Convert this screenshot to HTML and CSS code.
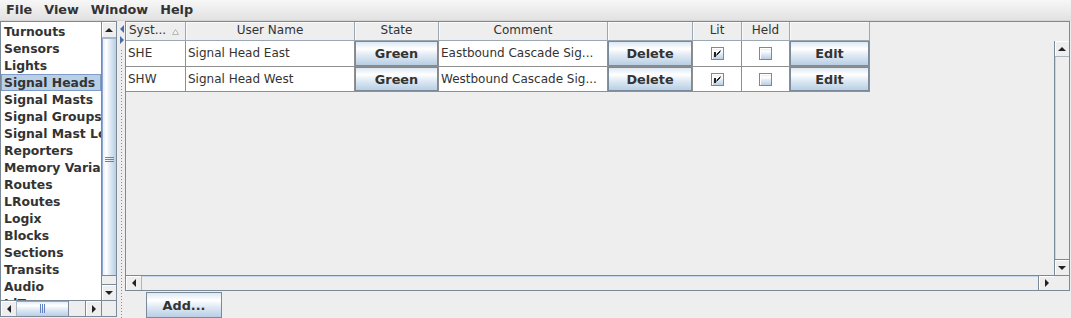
FILE: index.html
```html
<!DOCTYPE html>
<html>
<head>
<meta charset="utf-8">
<title>Tables</title>
<link rel="stylesheet" href="styles.css">
</head>
<body>
<div class="menubar">
  <span class="menu">File</span><span class="menu">View</span><span class="menu">Window</span><span class="menu">Help</span>
</div>
<div class="main">
  <div class="listpane">
    <div class="listview">
      <div class="item">Turnouts</div>
      <div class="item">Sensors</div>
      <div class="item">Lights</div>
      <div class="item sel">Signal Heads</div>
      <div class="item">Signal Masts</div>
      <div class="item">Signal Groups</div>
      <div class="item">Signal Mast Logic</div>
      <div class="item">Reporters</div>
      <div class="item">Memory Variables</div>
      <div class="item">Routes</div>
      <div class="item">LRoutes</div>
      <div class="item">Logix</div>
      <div class="item">Blocks</div>
      <div class="item">Sections</div>
      <div class="item">Transits</div>
      <div class="item">Audio</div>
      <div class="item">IdTags</div>
    </div>
    <div class="vsb">
      <div class="arr a-up"><svg width="8" height="4"><polygon points="0,4 4,0 8,4" fill="#222"/></svg></div>
      <div class="thumb-v"><svg width="9" height="5"><path d="M0 0.5H9M0 2.5H9M0 4.5H9" stroke="#6382bf" stroke-width="1"/></svg></div>
      <div class="track"></div>
      <div class="arr a-down"><svg width="8" height="4"><polygon points="0,0 8,0 4,4" fill="#222"/></svg></div>
    </div>
    <div class="hsb">
      <div class="arr a-left"><svg width="4" height="8"><polygon points="4,0 4,8 0,4" fill="#222"/></svg></div>
      <div class="thumb-h"><svg width="5" height="9"><path d="M0.5 0V9M2.5 0V9M4.5 0V9" stroke="#6382bf" stroke-width="1"/></svg></div>
      <div class="track"></div>
      <div class="arr a-right"><svg width="4" height="8"><polygon points="0,0 0,8 4,4" fill="#222"/></svg></div>
    </div>
    <div class="corner"></div>
  </div>

  <div class="divider">
    <svg class="onetouch" width="8" height="21"><polygon points="7,1 7,9 3,5" fill="#4a6ca6"/><polygon points="3,12 3,20 7,16" fill="#4a6ca6"/></svg>
    <div class="dots"></div>
  </div>

  <div class="rightpanel">
    <div class="tablepane">
      <div class="thead">
        <div class="th c1 sys"><span>Syst...</span><svg class="sort" width="7" height="6"><polygon points="3.5,0.5 6.5,5.5 0.5,5.5" fill="#f6f6f6" stroke="#b4b4b4" stroke-width="1"/></svg></div>
        <div class="th c2">User Name</div>
        <div class="th c3">State</div>
        <div class="th c4">Comment</div>
        <div class="th c5"></div>
        <div class="th c6">Lit</div>
        <div class="th c7">Held</div>
        <div class="th c8"></div>
      </div>
      <div class="topcorner"></div>
      <div class="tbody">
        <div class="row first">
          <div class="td c1">SHE</div>
          <div class="td c2">Signal Head East</div>
          <div class="td c3 bc"><button class="tbtn">Green</button></div>
          <div class="td c4">Eastbound Cascade Sig...</div>
          <div class="td c5 bc"><button class="tbtn">Delete</button></div>
          <div class="td c6 cc"><span class="chk"><svg width="11" height="11"><rect x="2" y="4" width="2" height="5" fill="#222"/><path d="M8.5 2.5L4.5 6.5M8.5 3.5L4.5 7.5" stroke="#222" stroke-width="1"/></svg></span></div>
          <div class="td c7 cc"><span class="chk"></span></div>
          <div class="td c8 bc"><button class="tbtn">Edit</button></div>
        </div>
        <div class="row">
          <div class="td c1">SHW</div>
          <div class="td c2">Signal Head West</div>
          <div class="td c3 bc"><button class="tbtn">Green</button></div>
          <div class="td c4">Westbound Cascade Sig...</div>
          <div class="td c5 bc"><button class="tbtn">Delete</button></div>
          <div class="td c6 cc"><span class="chk"><svg width="11" height="11"><rect x="2" y="4" width="2" height="5" fill="#222"/><path d="M8.5 2.5L4.5 6.5M8.5 3.5L4.5 7.5" stroke="#222" stroke-width="1"/></svg></span></div>
          <div class="td c7 cc"><span class="chk"></span></div>
          <div class="td c8 bc"><button class="tbtn">Edit</button></div>
        </div>
      </div>
      <div class="vsb tv">
        <div class="arr a-up"><svg width="8" height="4"><polygon points="0,4 4,0 8,4" fill="#222"/></svg></div>
        <div class="track hl-v"></div>
        <div class="arr a-down"><svg width="8" height="4"><polygon points="0,0 8,0 4,4" fill="#222"/></svg></div>
      </div>
      <div class="hsb">
        <div class="arr a-left"><svg width="4" height="8"><polygon points="4,0 4,8 0,4" fill="#222"/></svg></div>
        <div class="track hl-h"></div>
        <div class="arr a-right"><svg width="4" height="8"><polygon points="0,0 0,8 4,4" fill="#222"/></svg></div>
      </div>
      <div class="corner tcorner"></div>
    </div>
    <div class="bottom">
      <button class="addbtn">Add...</button>
    </div>
  </div>
</div>
</body>
</html>
```
FILE: styles.css
```css
* { box-sizing: border-box; }
html, body { margin: 0; padding: 0; }
body {
  width: 1071px;
  height: 318px;
  overflow: hidden;
  background: #eeeeee;
  font-family: "DejaVu Sans", Verdana, sans-serif;
  color: #333333;
}

/* menu bar */
.menubar {
  height: 21px;
  display: flex;
  align-items: flex-start;
  padding-top: 2px;
  background: linear-gradient(#f7f7f7, #e2e2e2);
  border-bottom: 1px solid #d6d6d6;
}
.menu {
  font-size: 12.8px;
  font-weight: bold;
  line-height: 15px;
  padding: 0 6px;
  color: #333333;
}

.main {
  display: flex;
  height: 297px;
}

/* left list */
.listpane {
  flex: none;
  width: 117px;
  height: 296px;
  border: 1px solid #7a8a99;
  display: grid;
  grid-template-columns: 100px 15px;
  grid-template-rows: 278px 16px;
}
.listview {
  background: #ffffff;
  overflow: hidden;
  padding-top: 1px;
}
.item {
  height: 17px;
  line-height: 17px;
  padding-left: 3px;
  font-size: 12.4px;
  font-weight: bold;
  white-space: nowrap;
  color: #333333;
}
.item.sel {
  background: #b8cfe5;
  border: 1px solid #7f9bc8;
  line-height: 15px;
  padding-left: 2px;
}

/* scrollbars */
.vsb {
  display: flex;
  flex-direction: column;
  border-left: 1px solid #7a8a99;
  background: #eeeeee;
  min-height: 0;
}
.hsb {
  display: flex;
  border-top: 1px solid #7a8a99;
  background: #eeeeee;
  min-width: 0;
}
.arr {
  flex: none;
  display: flex;
  align-items: center;
  justify-content: center;
  background: #eeeeee;
  box-shadow: inset 1px 1px #ffffff;
}
.arr svg { display: block; }
.vsb .arr { height: 16px; }
.hsb .arr { width: 16px; }
.a-up { border-bottom: 1px solid #a8b6c4; }
.a-down { border-top: 1px solid #7a8a99; }
.a-left { border-right: 1px solid #a8b6c4; }
.a-right { border-left: 1px solid #7a8a99; }
.track { flex: 1; }
.hl-v { box-shadow: inset 1px 0 #c4d6e9; }
.hl-h { box-shadow: inset 0 1px #c4d6e9; }

.thumb-v {
  flex: none;
  height: 238px;
  border-top: 1px solid #a3b8cc;
  border-bottom: 1px solid #7a8a99;
  box-shadow: inset 1px 0 #8fa8d0;
  background: linear-gradient(to right, #dde8f3 0%, #ffffff 30%, #dde8f3 60%, #b8cfe5 100%);
  display: flex;
  align-items: center;
  justify-content: center;
}
.thumb-v svg { display: block; margin-top: 4px; }
.thumb-h {
  flex: none;
  width: 52px;
  border-right: 1px solid #7a8a99;
  box-shadow: inset 0 1px #8fa8d0;
  background: linear-gradient(to bottom, #dde8f3 0%, #ffffff 30%, #dde8f3 60%, #b8cfe5 100%);
  display: flex;
  align-items: center;
  justify-content: center;
}
.thumb-h svg { display: block; }
.corner {
  background: #eeeeee;
  border-top: 1px solid #7a8a99;
  border-left: 1px solid #7a8a99;
}

/* split divider */
.divider {
  flex: none;
  width: 8px;
  display: flex;
  flex-direction: column;
}
.onetouch {
  display: block;
  margin-top: 3px;
  flex: none;
}
.dots {
  flex: 1;
  width: 1px;
  margin: 5px 0 0 4px;
  background: repeating-linear-gradient(to bottom, #8a8a8a 0, #8a8a8a 1px, transparent 1px, transparent 3px);
}

/* right panel */
.rightpanel {
  flex: 1;
  display: flex;
  flex-direction: column;
  min-width: 0;
}
.tablepane {
  flex: none;
  width: 945px;
  height: 270px;
  border: 1px solid #7a8a99;
  display: grid;
  grid-template-columns: 928px 15px;
  grid-template-rows: 19px 234px 15px;
  background: #eeeeee;
}
.thead {
  display: flex;
  height: 19px;
  overflow: hidden;
}
.th {
  flex: none;
  height: 19px;
  border-right: 1px solid #9ba7b3;
  border-bottom: 1px solid #9ba7b3;
  box-shadow: inset 1px 1px #fafafa;
  font-size: 12px;
  line-height: 16px;
  text-align: center;
  white-space: nowrap;
  overflow: hidden;
  color: #333333;
  background: #eeeeee;
}
.th.sys {
  display: flex;
  align-items: flex-start;
  text-align: left;
  padding-left: 3px;
}
.sort {
  display: block;
  margin: 7px 6px 0 auto;
  flex: none;
}
.c1 { width: 60px; }
.c2 { width: 169px; }
.c3 { width: 84px; }
.c4 { width: 169px; }
.c5 { width: 85px; }
.c6 { width: 49px; }
.c7 { width: 48px; }
.c8 { width: 80px; }

.tbody {
  overflow: hidden;
  min-height: 0;
}
.row {
  display: flex;
  height: 25px;
}
.row.first { height: 26px; }
.td {
  flex: none;
  height: 100%;
  background: #ffffff;
  border-right: 1px solid #8f8f8f;
  border-bottom: 1px solid #8f8f8f;
  font-size: 12px;
  line-height: 24px;
  padding-left: 2px;
  white-space: nowrap;
  overflow: hidden;
  color: #333333;
}
.row.first .td { line-height: 25px; }
.td.bc { padding: 0; }
.td.cc {
  padding: 0;
  display: flex;
  align-items: center;
  justify-content: center;
}
.tbtn {
  display: block;
  width: 100%;
  height: 100%;
  margin: 0;
  padding: 0;
  border: 1px solid #7a8a99;
  background: linear-gradient(to bottom, #dde8f3 0%, #ffffff 30%, #dde8f3 60%, #b8cfe5 100%);
  font-family: "DejaVu Sans", Verdana, sans-serif;
  font-size: 12.8px;
  font-weight: bold;
  color: #333333;
  text-align: center;
  line-height: 15px;
}
.chk {
  display: block;
  width: 13px;
  height: 13px;
  border: 1px solid #7a8a99;
  box-shadow: inset 1px 1px #ffffff;
  background: linear-gradient(to bottom, #dde8f3 0%, #ffffff 30%, #dde8f3 60%, #b8cfe5 100%);
}
.chk svg { display: block; }

.tv { border-left: 1px solid #7a8a99; }
.tcorner { border-left: none; }

.bottom {
  flex: none;
  padding: 1px 0 0 21px;
}
.addbtn {
  display: block;
  width: 76px;
  height: 26px;
  margin: 0;
  padding: 0;
  border: 1px solid #7a8a99;
  background: linear-gradient(to bottom, #dde8f3 0%, #ffffff 30%, #dde8f3 60%, #b8cfe5 100%);
  font-family: "DejaVu Sans", Verdana, sans-serif;
  font-size: 12.8px;
  font-weight: bold;
  color: #333333;
  line-height: 15px;
}
```
